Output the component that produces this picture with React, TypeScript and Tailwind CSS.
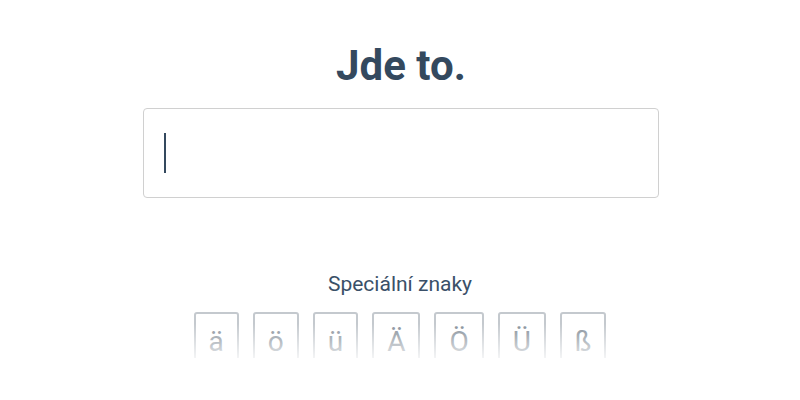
import React from "react";

const chars = ["ä", "ö", "ü", "Ä", "Ö", "Ü", "ß"];

export default function App() {
  return (
    <div className="w-[800px] h-[400px] bg-white flex flex-col items-center overflow-hidden" style={{ fontFamily: "Roboto, 'Noto Sans', sans-serif" }}>
      <h1 className="mt-[38px] pl-[2px] text-[42px] leading-[56px] font-bold text-[#34495e]">Jde to.</h1>
      <div className="mt-[14px] ml-[2px] w-[516px] h-[90px] border border-[#d0d0d0] rounded-[4px] flex items-center pl-[20px]">
        <div className="w-[2px] h-[40px] bg-[#34495e]" />
      </div>
      <div className="mt-[72px] text-[21px] leading-[28px] text-[#3a5068]">Speciální znaky</div>
      <div className="relative mt-[14px] h-[46px] overflow-hidden">
        <div className="flex gap-[14px]">
          {chars.map((c) => (
            <div key={c} className="px-[13px] pt-[10px] h-[60px] border-2 border-[#c4c9ce] rounded-[3px] text-[28px] leading-[36px] text-[#858f99] text-center">
              {c}
            </div>
          ))}
        </div>
        <div className="absolute inset-0 bg-gradient-to-b from-white/0 from-25% to-white/80" />
      </div>
    </div>
  );
}
